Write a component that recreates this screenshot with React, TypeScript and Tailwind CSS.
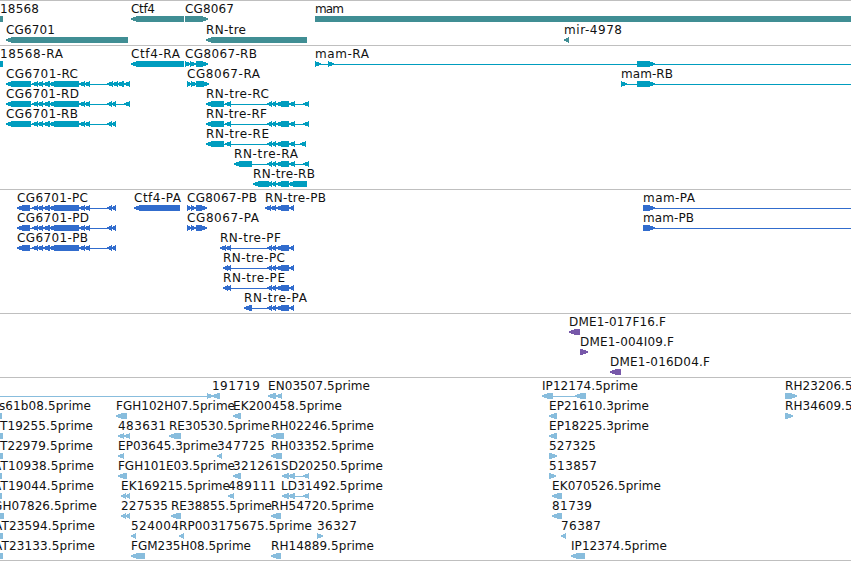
// App.tsx
type Strand = "+" | "-" | ".";
type Exon = [start: number, end: number];

interface Feature {
  label: string;
  // left and right edge of the label
  text: Exon;
  strand: Strand;
  exons: Exon[];
  // intron line, when it runs past the outer exons
  span?: Exon;
}

interface Track {
  id: string;
  fill: string;
  rowHeight: string;
  rows: Feature[][];
}

const VIEW_END = 851;

const f = (
  label: string,
  text: Exon,
  strand: Strand,
  exons: Exon[],
  span?: Exon
): Feature => ({ label, text, strand, exons, span });

const cgBody: Exon[] = [[32, 38], [37, 43], [43, 50], [49, 79], [79, 85], [84, 90]];
const rnMiddle: Exon[] = [[267, 272], [271, 276], [276, 289], [289, 295]];
const rnCoding: Exon[] = [[267, 272], [271, 276], [276, 289], [289, 294]];
const cgCoding: Exon[] = [[17, 30], ...cgBody, [107, 112], [111, 116]];
const sdExons: Exon[] = [[282, 289], [288, 295], [303, 309]];

const tracks: Track[] = [
  {
    id: "genes",
    fill: "fill-[#408e94]",
    rowHeight: "h-[21px]",
    rows: [
      [
        f("18568", [0, 39], ".", [[0, 3]]),
        f("Ctf4", [131, 155], "-", [[131, 184]]),
        f("CG8067", [185, 234], "+", [[185, 208]]),
        f("mam", [315, 344], ".", [[315, VIEW_END]]),
      ],
      [
        f("CG6701", [6, 55], "-", [[6, 128]]),
        f("RN-tre", [206, 246], "-", [[206, 307]]),
        f("mir-4978", [564, 622], "-", [[564, 569]]),
      ],
    ],
  },
  {
    id: "transcripts",
    fill: "fill-[#009dbf]",
    rowHeight: "h-5",
    rows: [
      [
        f("18568-RA", [0, 63], ".", [[0, 3]]),
        f("Ctf4-RA", [131, 180], "-", [[131, 184]]),
        f("CG8067-RB", [185, 257], "+", [[185, 191], [190, 196], [196, 208]]),
        f("mam-RA", [315, 369], "+", [[315, 321], [328, 334], [637, 655]], [315, VIEW_END]),
      ],
      [
        f("CG6701-RC", [6, 78], "-", [[6, 31], ...cgBody, [107, 113], [112, 118], [117, 124], [124, 130]]),
        f("CG8067-RA", [187, 260], "+", [[187, 192], [191, 197], [196, 209]]),
        f("mam-RB", [621, 673], "+", [[621, 627], [637, 655]], [621, VIEW_END]),
      ],
      [
        f("CG6701-RD", [6, 79], "-", [[6, 31], ...cgBody, [107, 112], [111, 116], [124, 130]]),
        f("RN-tre-RC", [206, 269], "-", [[206, 224], [225, 231], ...rnMiddle, [303, 309]]),
      ],
      [
        f("CG6701-RB", [6, 78], "-", [[6, 31], ...cgBody, [107, 112], [111, 116]]),
        f("RN-tre-RF", [206, 267], "-", [[206, 224], [225, 231], ...rnMiddle, [303, 309]]),
      ],
      [f("RN-tre-RE", [206, 269], "-", [[206, 224], [225, 231], ...rnMiddle, [300, 306]])],
      [f("RN-tre-RA", [234, 298], "-", [[234, 252], ...rnMiddle, [303, 309]])],
      [f("RN-tre-RB", [253, 315], "-", [[253, 269], [267, 272], [271, 276], [276, 289], [288, 307]])],
    ],
  },
  {
    id: "proteins",
    fill: "fill-[#316ccd]",
    rowHeight: "h-5",
    rows: [
      [
        f("CG6701-PC", [17, 88], "-", cgCoding),
        f("Ctf4-PA", [134, 181], "-", [[134, 180]]),
        f("CG8067-PB", [187, 257], "+", [[187, 192], [191, 196], [196, 207]]),
        f("RN-tre-PB", [265, 326], "-", [[265, 271], [270, 276], [276, 289], [289, 294]]),
        f("mam-PA", [643, 695], "+", [[643, 655]], [643, VIEW_END]),
      ],
      [
        f("CG6701-PD", [17, 89], "-", cgCoding),
        f("CG8067-PA", [187, 259], "+", [[187, 192], [191, 196], [196, 207]]),
        f("mam-PB", [643, 694], "+", [[643, 655]], [643, VIEW_END]),
      ],
      [
        f("CG6701-PB", [17, 88], "-", cgCoding),
        f("RN-tre-PF", [220, 281], "-", [[220, 226], [225, 231], ...rnCoding]),
      ],
      [f("RN-tre-PC", [223, 285], "-", [[223, 228], [226, 231], ...rnCoding])],
      [f("RN-tre-PE", [223, 285], "-", [[223, 228], [226, 231], ...rnCoding])],
      [f("RN-tre-PA", [244, 307], "-", [[244, 252], ...rnCoding])],
    ],
  },
  {
    id: "bacs",
    fill: "fill-[#7758a9]",
    rowHeight: "h-5",
    rows: [
      [f("DME1-017F16.F", [569, 666], "-", [[569, 580]])],
      [f("DME1-004I09.F", [580, 674], "+", [[580, 588]])],
      [f("DME1-016D04.F", [610, 710], "-", [[610, 621]])],
    ],
  },
  {
    id: "ests",
    fill: "fill-[#88bddd]",
    rowHeight: "h-5",
    rows: [
      [
        f("", [0, 0], "+", [[207, 213]], [0, 212]),
        f("191719", [212, 260], "-", [[212, 220]]),
        f("EN03507.5prime", [268, 370], "-", [[268, 276], [276, 282]]),
        f("IP12174.5prime", [542, 638], "-", [[542, 553], [575, 586]]),
        f("RH23206.5prime", [785, 888], "+", [[785, 797]]),
      ],
      [
        f("s61b08.5prime", [-1, 91], ".", [[0, 2]]),
        f("FGH102H07.5prime", [116, 235], "-", [[116, 127]]),
        f("EK200458.5prime", [233, 342], "-", [[233, 241]]),
        f("EP21610.3prime", [549, 649], "-", [[549, 557]]),
        f("RH34609.5prime", [785, 888], "+", [[785, 793]]),
      ],
      [
        f("T19255.5prime", [0, 93], ".", [[0, 3]]),
        f("483631", [118, 166], "-", [[118, 124], [124, 130]]),
        f("RE30530.5prime", [169, 270], "-", [[169, 181]]),
        f("RH02246.5prime", [271, 374], "-", [[271, 284]]),
        f("EP18225.3prime", [549, 649], "-", [[549, 557]]),
      ],
      [
        f("T22979.5prime", [0, 93], ".", [[0, 3]]),
        f("EP03645.3prime", [118, 218], "-", [[118, 124]]),
        f("347725", [217, 265], "-", [[217, 222]]),
        f("RH03352.5prime", [271, 374], "-", [[271, 282]]),
        f("527325", [549, 596], "+", [[549, 557]]),
      ],
      [
        f("AT10938.5prime", [-7, 94], ".", [[0, 2]]),
        f("FGH101E03.5prime", [118, 235], "-", [[118, 127]]),
        f("321261", [233, 281], "-", [[233, 241]]),
        f("SD20250.5prime", [281, 383], "-", sdExons),
        f("513857", [549, 597], "+", [[549, 556]]),
      ],
      [
        f("AT19044.5prime", [-7, 94], ".", [[0, 2]]),
        f("EK169215.5prime", [121, 230], "-", [[121, 126], [125, 130]]),
        f("489111", [228, 276], "-", [[228, 234]]),
        f("LD31492.5prime", [281, 383], "-", sdExons),
        f("EK070526.5prime", [552, 661], "-", [[552, 562]]),
      ],
      [
        f("GH07826.5prime", [-7, 97], ".", [[0, 4]]),
        f("227535", [121, 168], "-", [[121, 126], [125, 130]]),
        f("RE38855.5prime", [171, 272], "-", [[171, 181]]),
        f("RH54720.5prime", [271, 374], "-", [[271, 281]]),
        f("81739", [552, 592], "-", [[552, 562]]),
      ],
      [
        f("AT23594.5prime", [-6, 95], ".", [[0, 3]]),
        f("524004", [131, 179], "-", [[131, 136]]),
        f("RP003175675.5prime", [179, 312], "-", [[179, 184]]),
        f("36327", [317, 357], "+", [[317, 323]]),
        f("76387", [561, 601], "-", [[561, 566]]),
      ],
      [
        f("AT23133.5prime", [-6, 95], ".", [[0, 3]]),
        f("FGM235H08.5prime", [131, 251], "-", [[131, 145]]),
        f("RH14889.5prime", [271, 374], "-", [[271, 281]]),
        f("IP12374.5prime", [571, 667], "-", [[571, 585]]),
      ],
    ],
  },
];

// A block with a blunt arrow head on the side the strand points to
function exonPoints([start, end]: Exon, strand: Strand) {
  const head = Math.min(6, end - start);
  if (strand === "-") {
    const neck = start + head;
    return `${start},17.4 ${neck},15 ${end},15 ${end},21 ${neck},21 ${start},18.8`;
  }
  if (strand === "+") {
    const neck = end - head;
    return `${end},17.4 ${neck},15 ${start},15 ${start},21 ${neck},21 ${end},18.8`;
  }
  return `${start},15 ${end},15 ${end},21 ${start},21`;
}

function FeatureGlyph({ feature, fill }: { feature: Feature; fill: string }) {
  const { label, text, strand, exons } = feature;
  const [from, to] = feature.span ?? [exons[0][0], exons[exons.length - 1][1]];

  return (
    <g>
      <g className={fill} shapeRendering="crispEdges">
        <rect x={from} y={18} width={to - from} height={1} />
        {exons.map((exon) => (
          <polygon key={exon[0]} points={exonPoints(exon, strand)} />
        ))}
      </g>
      {label && (
        <text x={text[0]} y={12} textLength={text[1] - text[0]} className="fill-[#111]">
          {label}
        </text>
      )}
    </g>
  );
}

export default function App() {
  return (
    <main className="w-[851px] overflow-hidden border-b border-[#bfbfbf] bg-white font-['DejaVu_Sans',sans-serif] text-[12px]">
      {tracks.map((track) => (
        <section
          key={track.id}
          className={`flex flex-col border-t border-[#bfbfbf] ${
            track.id === "genes" || track.id === "ests" ? "pb-[2px]" : "pb-[3px]"
          }`}
        >
          {track.rows.map((row, i) => (
            <div key={i} className={track.rowHeight}>
              <svg width={VIEW_END} height={21} className="block overflow-visible">
                {row.map((feature) => (
                  <FeatureGlyph
                    key={`${feature.label}-${feature.text[0]}`}
                    feature={feature}
                    fill={track.fill}
                  />
                ))}
              </svg>
            </div>
          ))}
        </section>
      ))}
    </main>
  );
}
